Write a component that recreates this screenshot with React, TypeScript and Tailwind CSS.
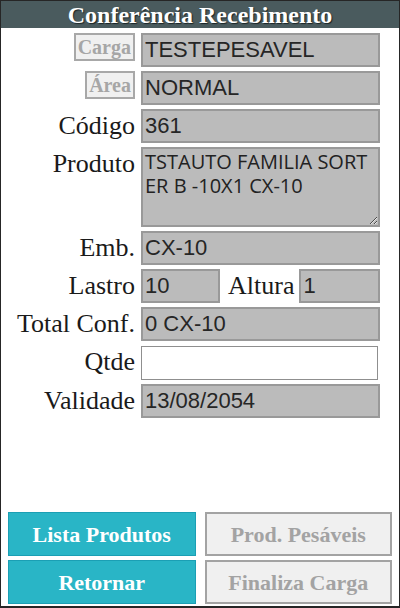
import React from 'react';

const serif = { fontFamily: '"Liberation Serif", "Times New Roman", serif' };
const sans = { fontFamily: '"Liberation Sans", Arial, sans-serif' };

function Label({ children, className = '' }: { children: React.ReactNode; className?: string }) {
  return (
    <span
      className={`text-[26px] leading-[34px] text-[#1a1a1a] whitespace-nowrap ${className}`}
      style={serif}
    >
      {children}
    </span>
  );
}

function Field({ value, className = 'w-[239px]' }: { value: string; className?: string }) {
  return (
    <input
      readOnly
      value={value}
      style={sans}
      className={`h-[34px] ${className} bg-[#bbbbbb] border-2 border-[#999999] px-[2px] text-[22px] text-[#262626] outline-none`}
    />
  );
}

function TagLabel({ children }: { children: React.ReactNode }) {
  return (
    <span
      className="h-[28px] px-[2px] flex items-center bg-[#f0f0f0] border-2 border-[#a8a8a8] text-[20px] font-bold text-[#a6a6a6] leading-none"
      style={serif}
    >
      {children}
    </span>
  );
}

export default function App() {
  return (
    <div className="w-[400px] h-[608px] border-t border-x border-b-2 border-[#262626] bg-white flex flex-col">
      <div className="h-[27px] bg-[#4a5b5e] flex items-center justify-center">
        <h1
          className="text-[24px] font-bold text-white leading-none [text-shadow:1px_1px_1px_#1a2426]"
          style={serif}
        >
          Conferência Recebimento
        </h1>
      </div>

      <div className="flex flex-col gap-[4px] pt-[5px]">
        <div className="flex items-start">
          <div className="w-[134px] flex justify-end">
            <TagLabel>Carga</TagLabel>
          </div>
          <div className="ml-[6px]">
            <Field value="TESTEPESAVEL" />
          </div>
        </div>

        <div className="flex items-start">
          <div className="w-[134px] flex justify-end">
            <TagLabel>Área</TagLabel>
          </div>
          <div className="ml-[6px]">
            <Field value="NORMAL" />
          </div>
        </div>

        <div className="flex items-start">
          <div className="w-[134px] text-right">
            <Label>Código</Label>
          </div>
          <div className="ml-[6px]">
            <Field value="361" />
          </div>
        </div>

        <div className="flex items-start">
          <div className="w-[134px] text-right">
            <Label>Produto</Label>
          </div>
          <div className="ml-[6px] flex">
            <textarea
              readOnly
              value={'TSTAUTO FAMILIA SORT\nER B -10X1 CX-10'}
              style={{ fontFamily: '"Open Sans", sans-serif' }}
              className="h-[80px] w-[239px] bg-[#bbbbbb] border-2 border-[#999999] px-[2px] pt-[1px] text-[20px] leading-[24px] text-[#222222] outline-none"
            />
          </div>
        </div>

        <div className="flex items-start">
          <div className="w-[134px] text-right">
            <Label>Emb.</Label>
          </div>
          <div className="ml-[6px]">
            <Field value="CX-10" />
          </div>
        </div>

        <div className="flex items-start">
          <div className="w-[134px] text-right">
            <Label>Lastro</Label>
          </div>
          <div className="ml-[6px] flex items-start">
            <Field value="10" className="w-[79px]" />
            <Label className="ml-[8px] mr-[5px]">Altura</Label>
            <Field value="1" className="w-[81px]" />
          </div>
        </div>

        <div className="flex items-start">
          <div className="w-[134px] text-right">
            <Label>Total Conf.</Label>
          </div>
          <div className="ml-[6px]">
            <Field value="0 CX-10" />
          </div>
        </div>

        <div className="flex items-start">
          <div className="w-[134px] text-right">
            <Label>Qtde</Label>
          </div>
          <div className="ml-[6px] pt-[1px]">
            <input
              style={sans}
              className="h-[34px] w-[237px] bg-white border border-[#8f8f8f] px-[2px] text-[22px] outline-none"
            />
          </div>
        </div>

        <div className="flex items-start">
          <div className="w-[134px] text-right">
            <Label>Validade</Label>
          </div>
          <div className="ml-[6px]">
            <Field value="13/08/2054" />
          </div>
        </div>
      </div>

      <div className="mt-auto grid grid-cols-2 gap-x-[9px] gap-y-[4px] px-[7px] pb-[2px]">
        <button
          className="h-[44px] bg-[#29b5c6] border border-[#1b9fb4] text-white text-[22px] font-bold"
          style={serif}
        >
          Lista Produtos
        </button>
        <button
          disabled
          className="h-[44px] bg-[#f0f0f0] border-2 border-[#a3a3a3] text-[#a3a3a3] text-[22px] font-bold"
          style={serif}
        >
          Prod. Pesáveis
        </button>
        <button
          className="h-[44px] bg-[#29b5c6] border border-[#1b9fb4] text-white text-[22px] font-bold"
          style={serif}
        >
          Retornar
        </button>
        <button
          disabled
          className="h-[44px] bg-[#f0f0f0] border-2 border-[#a3a3a3] text-[#a3a3a3] text-[22px] font-bold"
          style={serif}
        >
          Finaliza Carga
        </button>
      </div>
    </div>
  );
}
